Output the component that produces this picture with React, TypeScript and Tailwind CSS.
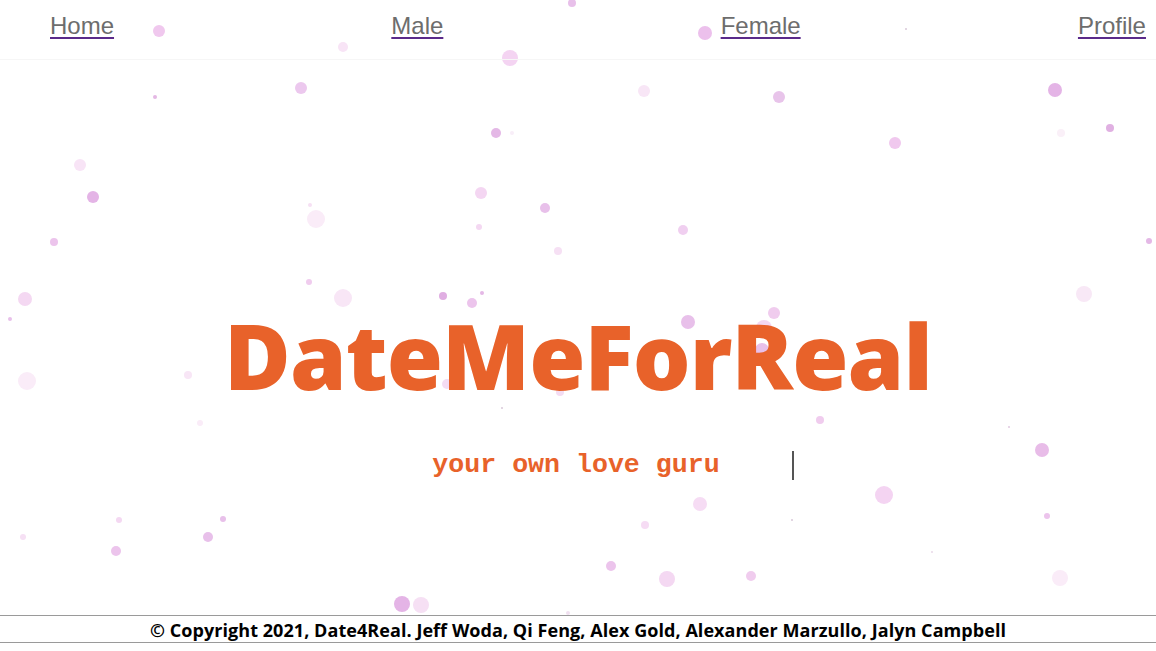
import React from "react";

//Bubble data: x, y, radius, color
type Bubble = [number, number, number, string];

const bubbles: Bubble[] = [
    [159, 31, 6, "#f0c8ee"], [343, 47, 5, "#f8e4f6"], [510, 58, 8, "#f4d4f2"], [572, 3, 4, "#e8c0ea"],
    [705, 33, 7, "#ecc0ec"], [906, 29, 1, "#d8c8d8"], [1055, 90, 7, "#e4b4e6"], [1110, 128, 4, "#e0b0e2"],
    [1061, 133, 4, "#faf0f8"], [301, 88, 6, "#ecc8ee"], [155, 97, 2, "#e4b8e4"], [644, 91, 6, "#f8e6f6"],
    [779, 97, 6, "#e8c4ea"], [496, 133, 5, "#e4b8e6"], [512, 133, 2, "#f8eef8"], [895, 143, 6, "#f0c8ee"],
    [80, 165, 6, "#f8e4f6"], [93, 197, 6, "#e4b4e6"], [481, 193, 6, "#f4d6f2"], [545, 208, 5, "#e8c0ea"],
    [316, 219, 9, "#faecf8"], [310, 205, 2, "#f6e0f4"], [479, 227, 3, "#f4d8f2"], [683, 230, 5, "#f0cff0"],
    [54, 242, 4, "#ecc4ec"], [558, 251, 4, "#f6e0f4"], [1149, 241, 3, "#e4b8e6"], [25, 299, 7, "#f4d8f2"],
    [343, 298, 9, "#f8e6f6"], [309, 282, 3, "#f0ccee"], [443, 296, 4, "#e0aee2"], [472, 303, 5, "#ecc4ec"],
    [482, 293, 2, "#e4b8e6"], [1084, 294, 8, "#f8e8f6"], [10, 319, 2, "#e8c0ea"], [688, 322, 7, "#e8c0ea"],
    [774, 313, 6, "#f0ccee"], [764, 328, 8, "#f4d8f2"], [762, 350, 7, "#e8c0ea"], [27, 381, 9, "#faecf8"],
    [188, 375, 4, "#f8e6f6"], [447, 384, 5, "#f4dcf2"], [560, 392, 4, "#f4dcf2"], [502, 408, 1, "#d8c8d8"],
    [820, 420, 4, "#f0ccee"], [200, 423, 3, "#faecf8"], [1009, 427, 1, "#e0c8e0"], [1042, 450, 7, "#e8bce8"],
    [884, 495, 9, "#f4d4f2"], [700, 504, 7, "#f6dcf4"], [1047, 516, 3, "#ecc4ec"], [119, 520, 3, "#f4d8f2"],
    [223, 519, 3, "#e8c0ea"], [645, 525, 4, "#f6dcf4"], [792, 520, 1, "#d8c8d8"], [208, 537, 5, "#e8c0ea"],
    [23, 537, 3, "#f6e0f4"], [116, 551, 5, "#ecc4ec"], [611, 566, 5, "#ecc4ec"], [667, 579, 8, "#f4d8f2"],
    [751, 576, 5, "#f0ccee"], [1060, 578, 8, "#faecf8"], [932, 552, 1, "#e8d8e8"], [402, 604, 8, "#e4b4e6"],
    [421, 605, 8, "#f6e0f4"], [568, 613, 2, "#f0e0f0"],
];

const links = ["Home", "Male", "Female", "Profile"];

const App = () => {
    return (
        <div className="relative h-[651px] w-full overflow-hidden bg-white flex flex-col">
            {/* Background particles */}
            <div className="absolute inset-0 pointer-events-none">
                {bubbles.map(([x, y, r, c], i) => (
                    <span
                        key={i}
                        className="absolute rounded-full"
                        style={{ left: x - r, top: y - r, width: r * 2, height: r * 2, backgroundColor: c }}
                    />
                ))}
            </div>

            {/* Nav */}
            <nav className="relative h-[60px] border-b border-[#f6f6f6] flex justify-between items-start pl-[50px] pr-[10px] pt-[10px] font-['Liberation_Sans',Arial,sans-serif] text-[24px] leading-[32px]">
                {links.map((l) => (
                    <a key={l} href="#" className="text-[#6d6d6d] underline decoration-[#5a2a8a] decoration-2 underline-offset-[3px]">
                        {l}
                    </a>
                ))}
            </nav>

            {/* Hero */}
            <main className="relative flex-1 flex flex-col items-center">
                <h1 className="mt-[250px] text-[#e8622a] font-['Open_Sans',sans-serif] font-extrabold text-[91px] leading-none tracking-[-0.9px]">
                    DateMeForReal
                </h1>
                <div className="mt-[50px] flex items-center ml-[70px]">
                    <span className="text-[#e8622a] font-['Liberation_Mono',monospace] font-bold text-[26.6px] leading-none">
                        your own love guru
                    </span>
                    <span className="ml-[72px] w-[2px] h-[29px] bg-[#555]" />
                </div>
            </main>

            {/* Footer */}
            <footer className="relative mb-[8px] border-y border-[#9a9a9a] h-[28px] flex items-center justify-center">
                <p className="mt-[2px] text-black font-['Open_Sans',sans-serif] font-bold text-[18px] leading-none tracking-[0.06px]">
                    © Copyright 2021, Date4Real. Jeff Woda, Qi Feng, Alex Gold, Alexander Marzullo, Jalyn Campbell
                </p>
            </footer>
        </div>
    );
};

export default App;
